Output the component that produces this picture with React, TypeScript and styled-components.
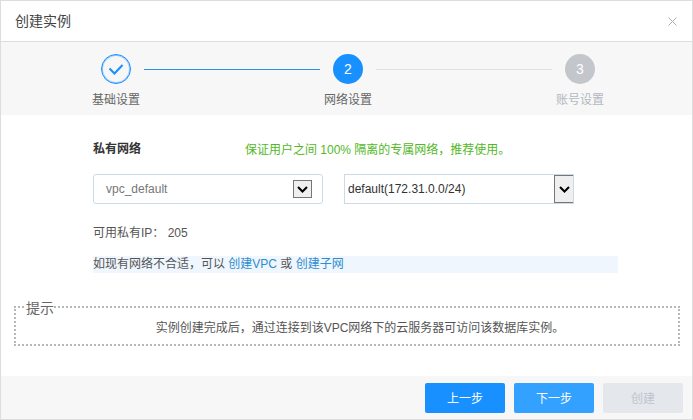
import React from 'react';
import styled, { createGlobalStyle } from 'styled-components';

const GlobalStyle = createGlobalStyle`
  html, body {
    margin: 0;
    padding: 0;
    background: #fff;
  }
  body {
    font-family: "Liberation Sans", "Noto Sans CJK SC", sans-serif;
    font-size: 12px;
    color: #555;
  }
  * {
    box-sizing: border-box;
  }
`;

const Dialog = styled.div`
  display: flex;
  flex-direction: column;
  width: 693px;
  height: 420px;
  border: 1px solid #ddd;
  background: #fff;
  overflow: hidden;
`;

const Header = styled.div`
  display: flex;
  align-items: center;
  justify-content: space-between;
  flex: none;
  height: 41px;
  padding: 0 15px 2px 14px;
  border-bottom: 1px solid #ddd;
  font-size: 14px;
  color: #444;
`;

const Close = styled.svg`
  width: 9px;
  height: 9px;
  margin-top: 3px;
  stroke: #a9b0b8;
  stroke-width: 1;
  fill: none;
`;

const Steps = styled.div`
  display: flex;
  justify-content: center;
  flex: none;
  height: 73px;
  padding: 12px 0 0 3px;
  background: #f7f7f7;
`;

const Step = styled.div<{ $muted?: boolean }>`
  display: flex;
  flex-direction: column;
  align-items: center;
  row-gap: 8px;
  width: 30px;
  font-size: 12px;
  line-height: 17px;
  white-space: nowrap;
  color: ${props => (props.$muted ? '#b4b8bf' : '#666')};
`;

const Circle = styled.div<{ $color: string; $outline?: boolean }>`
  display: flex;
  align-items: center;
  justify-content: center;
  flex: none;
  width: 30px;
  height: 30px;
  border-radius: 50%;
  font-size: 14px;
  color: #fff;
  background: ${props => (props.$outline ? 'transparent' : props.$color)};
  border: ${props => (props.$outline ? `1px solid ${props.$color}` : 'none')};
  box-shadow: ${props => (props.$outline ? 'inset 0 0 0 1px rgba(24, 144, 255, 0.45)' : 'none')};
`;

const Connector = styled.div<{ $active?: boolean }>`
  flex: none;
  width: 176px;
  height: 1px;
  margin: 15px 13px 0;
  background: ${props => (props.$active ? '#2f8ee0' : '#dfe1e5')};
`;

const Body = styled.div`
  display: flex;
  flex-direction: column;
  flex: 1;
  padding: 24px 12px 0 13px;
`;

const Form = styled.div`
  display: flex;
  flex-direction: column;
  padding-left: 79px;
`;

const TitleRow = styled.div`
  display: flex;
  align-items: center;
  height: 17px;
`;

const SectionTitle = styled.div`
  width: 152px;
  font-weight: 700;
  color: #333;
`;

const Recommend = styled.div`
  padding-top: 2px;
  color: #52b81f;
`;

const SelectRow = styled.div`
  display: flex;
  column-gap: 21px;
  margin-top: 18px;
`;

const Select = styled.div<{ $plain?: boolean }>`
  display: flex;
  align-items: center;
  justify-content: space-between;
  width: 230px;
  height: 30px;
  border: 1px solid #ccd9e6;
  border-radius: ${props => (props.$plain ? '0' : '3px')};
  padding: ${props => (props.$plain ? '0 0 0 3px' : '0 10px 0 12px')};
  font-size: 12px;
  color: ${props => (props.$plain ? '#333' : '#777')};
`;

const SelectArrow = styled.div<{ $plain?: boolean }>`
  display: flex;
  align-items: center;
  justify-content: center;
  width: 19px;
  height: ${props => (props.$plain ? '28px' : '18px')};
  background: #efefef;
  border: 1px solid #767676;
  border-width: ${props => (props.$plain ? '1px 0 1px 1px' : '1px')};

  svg {
    width: 11px;
    height: 7px;
    fill: none;
    stroke: #000;
    stroke-width: 2;
  }
`;

const Available = styled.div`
  margin-top: 21px;
  line-height: 17px;
  color: #555;
`;

const Tip = styled.div`
  width: 525px;
  height: 17px;
  margin-top: 14px;
  line-height: 17px;
  background: #eff6fd;
  color: #555;
`;

const TipLink = styled.a`
  color: #2e8ccf;
  text-decoration: none;
`;

const Notice = styled.fieldset`
  height: 47px;
  margin: 26px 0 0;
  padding: 0;
  border: 2px dotted #b8b8b8;
  text-align: center;
`;

const NoticeLegend = styled.legend`
  margin-left: 10px;
  padding: 2px 0 0;
  font-size: 14px;
  line-height: 14px;
  text-align: left;
  color: #666;
`;

const NoticeText = styled.div`
  line-height: 17px;
  margin-top: 5px;
  padding-left: 26px;
  color: #555;
`;

const Footer = styled.div`
  display: flex;
  align-items: center;
  justify-content: flex-end;
  column-gap: 9px;
  flex: none;
  height: 43px;
  padding: 0 9px 0 0;
  background: #f7f7f7;
`;

const Button = styled.button<{ $bg: string; $color?: string }>`
  width: 80px;
  height: 30px;
  padding: 0;
  border: none;
  border-radius: 2px;
  font: inherit;
  color: ${props => props.$color ?? '#fff'};
  background: ${props => props.$bg};
`;

const Chevron = () => (
  <svg viewBox="0 0 11 7">
    <path d="M1 1l4.5 4.5L10 1" />
  </svg>
);

export default function App(): React.ReactElement {
  return (
    <>
      <GlobalStyle />
      <Dialog>
        <Header>
          创建实例
          <Close viewBox="0 0 9 9">
            <path d="M0.5 0.5l8 8M8.5 0.5l-8 8" />
          </Close>
        </Header>
        <Steps>
          <Step>
            <Circle $color="#1890ff" $outline>
              <svg width="16" height="12" viewBox="0 0 16 12" fill="none" stroke="#1890ff" strokeWidth="2">
                <path d="M1.5 5.5l5 5 8-8.5" />
              </svg>
            </Circle>
            基础设置
          </Step>
          <Connector $active />
          <Step>
            <Circle $color="#1890ff">2</Circle>
            网络设置
          </Step>
          <Connector />
          <Step $muted>
            <Circle $color="#c3c6cb">3</Circle>
            账号设置
          </Step>
        </Steps>
        <Body>
          <Form>
            <TitleRow>
              <SectionTitle>私有网络</SectionTitle>
              <Recommend>保证用户之间 100% 隔离的专属网络，推荐使用。</Recommend>
            </TitleRow>
            <SelectRow>
              <Select>
                vpc_default
                <SelectArrow>
                  <Chevron />
                </SelectArrow>
              </Select>
              <Select $plain>
                default(172.31.0.0/24)
                <SelectArrow $plain>
                  <Chevron />
                </SelectArrow>
              </Select>
            </SelectRow>
            <Available>可用私有IP： 205</Available>
            <Tip>
              如现有网络不合适，可以 <TipLink href="#">创建VPC</TipLink> 或 <TipLink href="#">创建子网</TipLink>
            </Tip>
          </Form>
          <Notice>
            <NoticeLegend>提示</NoticeLegend>
            <NoticeText>实例创建完成后，通过连接到该VPC网络下的云服务器可访问该数据库实例。</NoticeText>
          </Notice>
        </Body>
        <Footer>
          <Button $bg="#1890ff">上一步</Button>
          <Button $bg="#33a1ff">下一步</Button>
          <Button $bg="#e4e7ec" $color="#c0c4cc">创建</Button>
        </Footer>
      </Dialog>
    </>
  );
}
